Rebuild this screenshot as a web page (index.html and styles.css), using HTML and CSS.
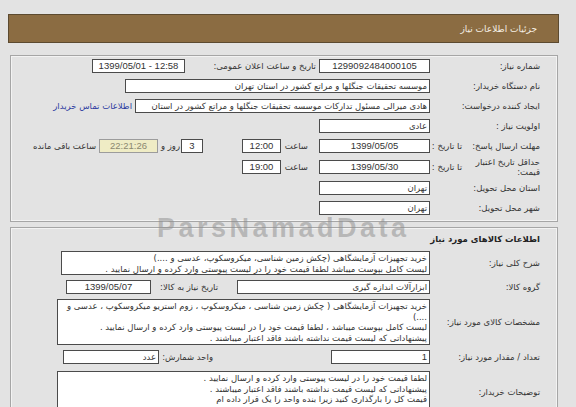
FILE: index.html
```html
<!DOCTYPE html>
<html lang="fa" dir="rtl">
<head>
<meta charset="utf-8">
<title>جزئیات اطلاعات نیاز</title>
<link rel="stylesheet" href="styles.css">
</head>
<body>
<div class="page">
  <div class="titlebar">جزئیات اطلاعات نیاز</div>

  <div class="panel info">
    <div class="row">
      <div class="label">شماره نیاز:</div>
      <div class="field w111 num">1299092484000105</div>
      <div class="label2 pub">تاریخ و ساعت اعلان عمومی:</div>
      <div class="field w93 num">1399/05/01 - 12:58</div>
    </div>
    <div class="row">
      <div class="label">نام دستگاه خریدار:</div>
      <div class="field w305">موسسه تحقیقات جنگلها و مراتع کشور در استان تهران</div>
    </div>
    <div class="row">
      <div class="label">ایجاد کننده درخواست:</div>
      <div class="field w295">هادی میرالی مسئول تدارکات موسسه تحقیقات جنگلها و مراتع کشور در استان</div>
      <a class="link" href="#">اطلاعات تماس خریدار</a>
    </div>
    <div class="row">
      <div class="label">اولویت نیاز :</div>
      <div class="field w111">عادی</div>
    </div>
    <div class="row">
      <div class="label split"><span class="main">مهلت ارسال پاسخ:</span><span class="sub">تا تاریخ :</span></div>
      <div class="field w111 num">1399/05/05</div>
      <div class="label2 saat">ساعت</div>
      <div class="field w39 num">12:00</div>
      <div class="spacer"></div>
      <div class="field w22 num">3</div>
      <div class="label2 day">روز و</div>
      <div class="field w59 num remain">22:21:26</div>
      <div class="label2 left">ساعت باقی مانده</div>
    </div>
    <div class="row tall">
      <div class="label split"><span class="main">حداقل تاریخ اعتبار قیمت:</span><span class="sub">تا تاریخ :</span></div>
      <div class="field w111 num">1399/05/30</div>
      <div class="label2 saat">ساعت</div>
      <div class="field w39 num">19:00</div>
    </div>
    <div class="row">
      <div class="label">استان محل تحویل:</div>
      <div class="field w111">تهران</div>
    </div>
    <div class="row">
      <div class="label">شهر محل تحویل:</div>
      <div class="field w111">تهران</div>
    </div>
  </div>

  <div class="panel goods">
    <div class="section-title">اطلاعات کالاهای مورد نیاز</div>
    <div class="row box-row">
      <div class="label">شرح کلی نیاز:</div>
      <div class="box w369 h24">خرید تجهیزات آزمایشگاهی (چکش زمین شناسی، میکروسکوپ، عدسی و ....)<br>لیست کامل بپوست میباشد لطفا قیمت خود را در لیست پیوستی وارد کرده و ارسال نمایید .</div>
    </div>
    <div class="row r22">
      <div class="label">گروه کالا:</div>
      <div class="field w193">ابزارآلات اندازه گیری</div>
      <div class="label2 need">تاریخ نیاز به کالا:</div>
      <div class="field w85 num">1399/05/07</div>
    </div>
    <div class="row box-row">
      <div class="label">مشخصات کالای مورد نیاز:</div>
      <div class="box w373 h46">خرید تجهیزات آزمایشگاهی ( چکش زمین شناسی ، میکروسکوپ ، زوم استریو میکروسکوپ ، عدسی و<br>....)<br>لیست کامل بپوست میباشد ، لطفا قیمت خود را در لیست پیوستی وارد کرده و ارسال نمایید .<br>پیشنهاداتی که لیست قیمت نداشته باشند فاقد اعتبار میباشند .</div>
    </div>
    <div class="row r22">
      <div class="label">تعداد / مقدار مورد نیاز:</div>
      <div class="field w99 ltr">1</div>
      <div class="label2 unit">واحد شمارش:</div>
      <div class="field w96">عدد</div>
    </div>
    <div class="row box-row top">
      <div class="label lbl-desc">توضیحات خریدار:</div>
      <div class="box w373 h60">لطفا قیمت خود را در لیست پیوستی وارد کرده و ارسال نمایید .<br>پیشنهاداتی که لیست قیمت نداشته باشند فاقد اعتبار میباشند .<br>قیمت کل را بارگذاری کنید زیرا بنده واحد را یک قرار داده ام</div>
    </div>
  </div>
</div>
<div class="watermark">ParsNamadData</div>
</body>
</html>
```
FILE: styles.css
```css
* { box-sizing: border-box; }
html, body { margin: 0; padding: 0; }
body {
  width: 576px;
  height: 407px;
  overflow: hidden;
  position: relative;
  background: #e3e3e3;
  direction: rtl;
  font-family: "DejaVu Sans", sans-serif;
  font-size: 8.5px;
  color: #222;
}
.page { padding: 14px 17px 0 8px; }
.titlebar {
  height: 29px;
  background: #8b6c42;
  border: 1px solid #5c4a30;
  color: #f5efe4;
  font-size: 9px;
  padding-right: 21px;
  display: flex;
  align-items: center;
}
.panel {
  margin: 12px 1px 0 2px;
  border: 1px solid #a6a6a6;
  box-shadow: inset 0 0 0 1px #f3f3f3;
  padding: 0 17px 3px 0;
}
.goods { margin-top: 5px; height: 200px; }
.row {
  display: flex;
  align-items: center;
  height: 20px;
}
.row.tall { height: 22px; }
.row.r22 { height: 22px; }
.label {
  width: 110px;
  flex: none;
  color: #333;
  white-space: nowrap;
}
.label.split { display: flex; align-items: center; }
.label.split .main { width: 78px; white-space: normal; line-height: 10px; }
.label.split .sub { width: 32px; }
.field {
  flex: none;
  height: 14px;
  line-height: 12px;
  background: #fff;
  border: 1px solid #4b4b4b;
  padding: 0 2px;
  white-space: nowrap;
  overflow: hidden;
  color: #333;
}
.num {
  text-align: center;
  direction: ltr;
  font-family: "Liberation Sans", sans-serif;
  font-size: 9.5px;
}
.ltr { direction: ltr; text-align: right; font-family: "Liberation Sans", sans-serif; font-size: 9.5px; }
.w22 { width: 22px; }
.w39 { width: 39px; }
.w59 { width: 59px; }
.w85 { width: 85px; }
.w93 { width: 93px; }
.w96 { width: 96px; }
.w99 { width: 99px; }
.w111 { width: 111px; }
.w193 { width: 193px; }
.w295 { width: 295px; }
.w305 { width: 305px; }
.w369 { width: 369px; }
.w373 { width: 373px; }
.label2 { flex: none; white-space: nowrap; color: #333; }
.pub { width: 134px; padding-right: 3px; }
.saat { width: 38px; padding-right: 11px; }
.spacer { width: 39px; flex: none; }
.day { width: 23px; padding-right: 1px; }
.left { padding-right: 3px; }
.need { width: 86px; padding-right: 19px; }
.unit { width: 172px; padding-right: 118px; }
.remain {
  background: #efecc5;
  border-color: #9c9c9c;
  color: #8a8870;
}
.link {
  margin-right: 3px;
  color: #2b3aa0;
  text-decoration: none;
  white-space: nowrap;
}
.section-title {
  height: 22px;
  display: flex;
  align-items: center;
  font-weight: bold;
  color: #222;
  font-size: 8.5px;
}
.box {
  flex: none;
  background: #fff;
  border: 1px solid #4b4b4b;
  padding: 1px 2px;
  line-height: 10.5px;
  overflow: hidden;
  white-space: nowrap;
  color: #333;
}
.h24 { height: 24px; }
.h46 { height: 46px; }
.h60 { height: 60px; }
.box-row { height: auto; margin: 1px 0; }
.box-row.top { align-items: flex-start; margin-top: 3px; }
.lbl-desc { margin-top: 16px; }
.watermark {
  position: absolute;
  left: 157px;
  top: 213px;
  font-family: "Liberation Sans", sans-serif;
  font-weight: bold;
  font-size: 27px;
  letter-spacing: 3.5px;
  color: rgba(140, 140, 140, 0.5);
  pointer-events: none;
  direction: ltr;
}
```
